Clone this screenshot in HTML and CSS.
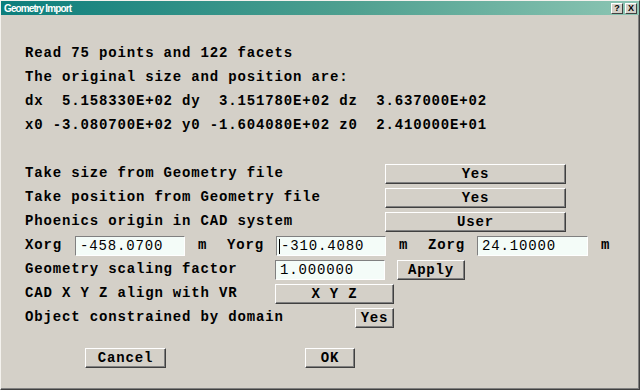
FILE: index.html
```html
<!DOCTYPE html>
<html lang="en">
<head>
    <meta charset="UTF-8">
    <title>Geometry Import</title>
    <link rel="stylesheet" href="styles.css">
</head>
<body>
    <div class="window">
        <div class="titlebar">
            <span class="title">Geometry Import</span>
            <div class="title-buttons">
                <span class="tbtn">?</span>
                <span class="tbtn">X</span>
            </div>
        </div>
        <div class="content">
            <div class="row">Read 75 points and 122 facets</div>
            <div class="row">The original size and position are:</div>
            <div class="row">dx  5.158330E+02 dy  3.151780E+02 dz  3.637000E+02</div>
            <div class="row">x0 -3.080700E+02 y0 -1.604080E+02 z0  2.410000E+01</div>
            <div class="row"></div>

            <div class="row">
                <span class="label w360">Take size from Geometry file</span>
                <button class="btn wide">Yes</button>
            </div>
            <div class="row">
                <span class="label w360">Take position from Geometry file</span>
                <button class="btn wide">Yes</button>
            </div>
            <div class="row">
                <span class="label w360">Phoenics origin in CAD system</span>
                <button class="btn wide">User</button>
            </div>
            <div class="row">
                <span class="label w50">Xorg</span>
                <div class="field">-458.0700</div>
                <span class="unit">m</span>
                <span class="label sub">Yorg</span>
                <div class="field"><span class="caret"></span>-310.4080</div>
                <span class="unit">m</span>
                <span class="label sub">Zorg</span>
                <div class="field zorg">24.10000</div>
                <span class="unit">m</span>
            </div>
            <div class="row">
                <span class="label w250">Geometry scaling factor</span>
                <div class="field">1.000000</div>
                <button class="btn apply">Apply</button>
            </div>
            <div class="row">
                <span class="label w250">CAD X Y Z align with VR</span>
                <button class="btn xyz">X Y Z</button>
            </div>
            <div class="row">
                <span class="label w330">Object constrained by domain</span>
                <button class="btn small">Yes</button>
            </div>
        </div>
        <div class="footer">
            <button class="btn cancel">Cancel</button>
            <button class="btn ok">OK</button>
        </div>
    </div>
</body>
</html>
```

FILE: styles.css
```css
body {
    margin: 0;
    background: #d4d0c8;
}

.window {
    width: 640px;
    height: 390px;
    box-sizing: border-box;
    background: #d4d0c8;
    border: 1px solid;
    border-color: #f4f2ee #404040 #404040 #f4f2ee;
    box-shadow: inset -1px -1px #808080;
    font-family: "Liberation Mono", "Courier New", monospace;
    font-weight: bold;
    font-size: 14px;
    letter-spacing: 0.84px;
    color: #000;
}

.titlebar {
    height: 14px;
    display: flex;
    align-items: center;
    justify-content: space-between;
    background: linear-gradient(to right, #0c7e7c, #4fa090 55%, #8cc5b3);
}

.title {
    font-family: "Liberation Sans", Arial, sans-serif;
    font-size: 10px;
    letter-spacing: -0.9px;
    color: #fff;
    padding-left: 3px;
}

.title-buttons {
    display: flex;
    gap: 2px;
    padding-right: 2px;
}

.tbtn {
    width: 10px;
    height: 9px;
    display: flex;
    align-items: center;
    justify-content: center;
    background: #d4d0c8;
    border: 1px solid;
    border-color: #fff #404040 #404040 #fff;
    font-family: "Liberation Sans", Arial, sans-serif;
    font-size: 9px;
    line-height: 9px;
    letter-spacing: 0;
}

.content {
    padding: 26px 0 0 24px;
}

.row {
    height: 24px;
    display: flex;
    align-items: center;
    white-space: pre;
}

.label { flex: none; }
.w360 { width: 360px; }
.w330 { width: 330px; }
.w250 { width: 250px; }
.w50 { width: 50px; }
.sub { margin-left: 20px; width: 49px; }

.unit {
    margin-left: 13px;
    width: 9px;
}

.btn {
    box-sizing: border-box;
    height: 20px;
    margin-top: 2px;
    padding: 0;
    background: #d4d0c8;
    border: 1px solid;
    border-color: #fff #404040 #404040 #fff;
    box-shadow: inset -1px -1px #808080;
    font: inherit;
    letter-spacing: inherit;
    color: #000;
    text-align: center;
    line-height: 17px;
}

.wide { width: 181px; }
.apply { width: 68px; margin-left: 12px; }
.xyz { width: 119px; }
.small { width: 39px; }

.field {
    box-sizing: border-box;
    width: 110px;
    height: 20px;
    margin-top: 2px;
    padding-left: 4px;
    display: flex;
    align-items: center;
    background: #f4fcf8;
    border: 1px solid;
    border-color: #808080 #fff #fff #808080;
    font-weight: normal;
}

.zorg { width: 111px; }

.caret {
    width: 1px;
    height: 15px;
    background: #000;
    margin-left: -2px;
    margin-right: 1px;
}

.footer {
    display: flex;
    padding: 17px 0 0 84px;
}

.cancel { width: 81px; }
.ok { width: 50px; margin-left: 139px; }
```
